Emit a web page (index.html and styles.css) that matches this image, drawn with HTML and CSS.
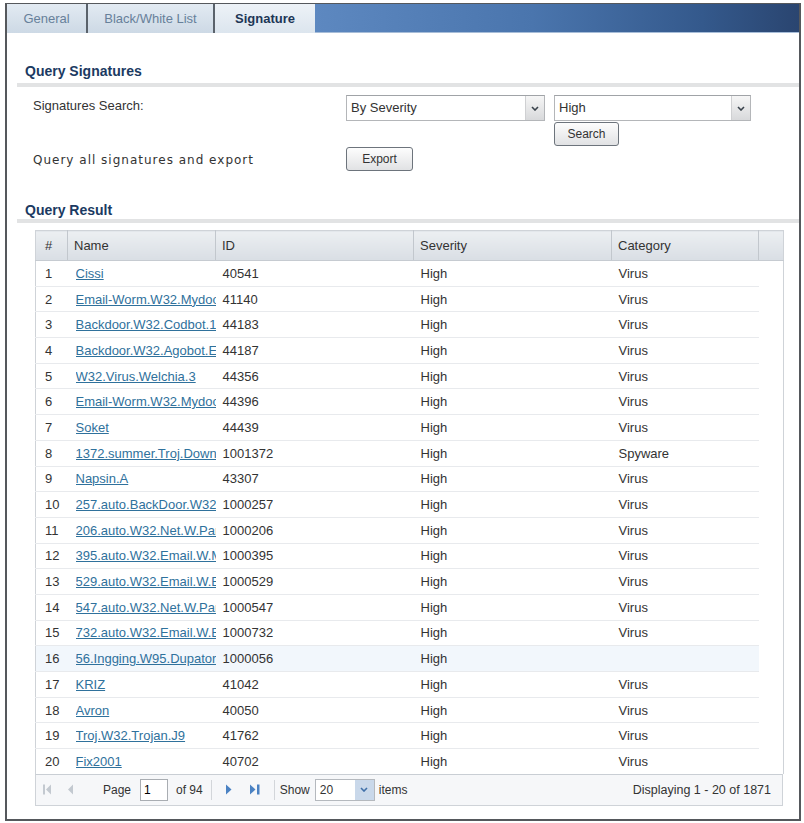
FILE: index.html
```html
<!DOCTYPE html>
<html lang="en">
<head>
  <meta charset="UTF-8" />
  <meta name="viewport" content="width=device-width, initial-scale=1.0"/>
  <title>IDP - Signature</title>
  <link rel="stylesheet" href="styles.css">
</head>
<body>
  <div class="panel">
    <div class="tabs">
      <div class="tab tab-general">General</div>
      <div class="tab tab-list">Black/White List</div>
      <div class="tab tab-active">Signature</div>
      <div class="tab-fill"></div>
    </div>

    <h3 class="section-title">Query Signatures</h3>
    <div class="query-form">
      <div class="form-label">Signatures Search:</div>
      <div class="search-controls">
        <div class="select select-type">
          <span class="select-text">By Severity</span>
          <span class="select-btn"><svg width="8" height="5" viewBox="0 0 8 5"><path d="M1 1 L4 4 L7 1" fill="none" stroke="#3a434c" stroke-width="1.6"/></svg></span>
        </div>
        <div class="search-col">
          <div class="select select-value">
            <span class="select-text">High</span>
            <span class="select-btn"><svg width="8" height="5" viewBox="0 0 8 5"><path d="M1 1 L4 4 L7 1" fill="none" stroke="#3a434c" stroke-width="1.6"/></svg></span>
          </div>
          <button class="btn btn-search">Search</button>
        </div>
      </div>
      <div class="form-label export-label">Query all signatures and export</div>
      <div><button class="btn btn-export">Export</button></div>
    </div>

    <h3 class="section-title result-title">Query Result</h3>
    <div class="grid-wrap">
      <table class="grid">
        <colgroup>
          <col style="width:32px"><col style="width:148px"><col style="width:198px">
          <col style="width:198px"><col style="width:147px"><col style="width:25px">
        </colgroup>
        <thead>
          <tr>
            <th class="c-num">#</th>
            <th>Name</th>
            <th>ID</th>
            <th>Severity</th>
            <th>Category</th>
            <th class="c-gutter"></th>
          </tr>
        </thead>
        <tbody id="rows"></tbody>
      </table>

      <div class="pager">
        <svg class="pg-first" width="8" height="11" viewBox="0 0 8 11"><rect x="0" y="0.5" width="2" height="10" fill="#c3c9d0"/><path d="M8 0.5 L3 5.5 L8 10.5 Z" fill="#c3c9d0"/></svg>
        <svg class="pg-prev" width="6" height="11" viewBox="0 0 6 11"><path d="M6 0.5 L1 5.5 L6 10.5 Z" fill="#c3c9d0"/></svg>
        <span class="pg-page">Page</span>
        <input class="pg-input" type="text" value="1">
        <span class="pg-of">of 94</span>
        <span class="pg-sep"></span>
        <svg class="pg-next" width="6" height="11" viewBox="0 0 6 11"><path d="M0 0.5 L5.5 5.5 L0 10.5 Z" fill="#4b82c3"/></svg>
        <svg class="pg-last" width="10" height="11" viewBox="0 0 10 11"><path d="M0 0.5 L5.5 5.5 L0 10.5 Z" fill="#4b82c3"/><rect x="7" y="0.5" width="2.5" height="10" fill="#4b82c3"/></svg>
        <span class="pg-sep pg-sep2"></span>
        <span class="pg-show">Show</span>
        <div class="pg-select">
          <span class="select-text">20</span>
          <span class="pg-select-btn"><svg width="8" height="5" viewBox="0 0 8 5"><path d="M1 1 L4 4 L7 1" fill="none" stroke="#3f6fa8" stroke-width="1.6"/></svg></span>
        </div>
        <span class="pg-items">items</span>
        <span class="pg-info">Displaying 1 - 20 of 1871</span>
      </div>
    </div>
  </div>

  <script>
    const signatures = [
      ['Cissi', '40541', 'Virus'],
      ['Email-Worm.W32.Mydoom.a', '41140', 'Virus'],
      ['Backdoor.W32.Codbot.1', '44183', 'Virus'],
      ['Backdoor.W32.Agobot.E', '44187', 'Virus'],
      ['W32.Virus.Welchia.3', '44356', 'Virus'],
      ['Email-Worm.W32.Mydoom.b', '44396', 'Virus'],
      ['Soket', '44439', 'Virus'],
      ['1372.summer.Troj.Downloader', '1001372', 'Spyware'],
      ['Napsin.A', '43307', 'Virus'],
      ['257.auto.BackDoor.W32.Agobot', '1000257', 'Virus'],
      ['206.auto.W32.Net.W.Parite', '1000206', 'Virus'],
      ['395.auto.W32.Email.W.Mydoom', '1000395', 'Virus'],
      ['529.auto.W32.Email.W.Bagle', '1000529', 'Virus'],
      ['547.auto.W32.Net.W.Parite', '1000547', 'Virus'],
      ['732.auto.W32.Email.W.Bagle', '1000732', 'Virus'],
      ['56.Ingging.W95.Dupator', '1000056', ''],
      ['KRIZ', '41042', 'Virus'],
      ['Avron', '40050', 'Virus'],
      ['Troj.W32.Trojan.J9', '41762', 'Virus'],
      ['Fix2001', '40702', 'Virus']
    ];

    const tbody = document.getElementById('rows');
    signatures.forEach((sig, i) => {
      const tr = document.createElement('tr');
      if (i === 15) tr.className = 'row-over';
      tr.innerHTML =
        '<td class="c-num">' + (i + 1) + '</td>' +
        '<td class="c-name"><div class="clip"><a href="#">' + sig[0] + '</a></div></td>' +
        '<td>' + sig[1] + '</td>' +
        '<td>High</td>' +
        '<td>' + sig[2] + '</td>' +
        '<td class="c-gutter"></td>';
      tbody.appendChild(tr);
    });
  </script>
</body>
</html>
```

FILE: styles.css
```css
body {
  margin: 0;
  font-family: "Liberation Sans", Arial, sans-serif;
  font-size: 13px;
  color: #333;
  background: #fff;
}
.panel {
  margin: 3px 3px 0 5px;
  height: 818px;
  box-sizing: border-box;
  border: 2px solid #55585c;
  border-top-width: 1px;
}

/* tabs */
.tabs {
  display: flex;
  height: 29px;
}
.tab {
  line-height: 29px;
  text-align: center;
  color: #67809a;
  background: linear-gradient(#e2eaf2, #cdd9e5);
  border-right: 2px solid #5a626b;
}
.tab-general {
  width: 79px;
}
.tab-list {
  width: 125px;
}
.tab-active {
  width: 100px;
  border-right: none;
  font-weight: bold;
  color: #1d3656;
  background: linear-gradient(#edf2f7, #dce5ee);
}
.tab-fill {
  flex: 1;
  background: linear-gradient(to right, #5d88c0, #4a75ad 45%, #34598c 80%, #2a4570);
  border-bottom: 1px solid #a7bdd8;
  box-sizing: border-box;
}

/* section titles */
.section-title {
  margin: 30px 0 0 10px;
  padding: 0 0 4px 8px;
  font-size: 14px;
  line-height: 16px;
  color: #1b3a62;
  border-bottom: 4px solid #e2e3e4;
}
.result-title {
  margin-top: 31px;
  padding-bottom: 1px;
}

/* query form */
.query-form {
  display: grid;
  grid-template-columns: 313px auto;
  margin-top: 8px;
  padding-left: 26px;
}
.form-label {
  padding-top: 3px;
  line-height: 16px;
  color: #333;
}
.export-label {
  padding-top: 6px;
  font-family: "DejaVu Sans", Verdana, sans-serif;
  font-size: 12px;
  letter-spacing: 1px;
}
.search-controls {
  display: flex;
  gap: 9px;
}
.search-col {
  display: flex;
  flex-direction: column;
  align-items: flex-start;
}
.select {
  display: flex;
  height: 26px;
  box-sizing: border-box;
  border: 1px solid #b4b6b9;
  border-top-color: #a0a3a7;
  background: #fff;
}
.select-type {
  width: 199px;
}
.select-value {
  width: 197px;
}
.select-text {
  flex: 1;
  padding-left: 4px;
  line-height: 24px;
}
.select-btn {
  width: 18px;
  display: flex;
  align-items: center;
  justify-content: center;
  background: linear-gradient(#f6f6f6, #d8d9db);
  border-left: 1px solid #cfd0d2;
}
.btn {
  height: 24px;
  padding: 0;
  font-family: "Liberation Sans", Arial, sans-serif;
  font-size: 12px;
  color: #333;
  background: linear-gradient(#fdfdfd, #e1e2e4);
  border: 1px solid #6d747c;
  border-radius: 3px;
}
.btn-search {
  width: 65px;
  margin-top: 1px;
}
.btn-export {
  width: 67px;
  margin-top: 1px;
}

/* result grid */
.grid-wrap {
  margin: 7px 0 0 28px;
  width: 748px;
}
.grid {
  width: 748px;
  table-layout: fixed;
  border-collapse: collapse;
  border: 1px solid #cfd3d8;
  border-bottom: none;
}
.grid th {
  height: 29px;
  padding: 0 0 0 6px;
  text-align: left;
  font-weight: normal;
  color: #333;
  background: linear-gradient(#eceff2, #d9dee4);
  border-right: 1px solid #c2c7cd;
  border-bottom: 1px solid #c6cbd1;
}
.grid th.c-num {
  padding-left: 9px;
}
.grid th.c-gutter {
  border-right: none;
}
.grid td {
  height: 24.7px;
  padding: 0 0 0 7px;
  white-space: nowrap;
  overflow: hidden;
  border-bottom: 1px solid #e8eaed;
}
.grid td.c-num {
  padding-left: 9px;
}
.grid td.c-name {
  padding-left: 8px;
}
.clip {
  overflow: hidden;
  white-space: nowrap;
}
.grid td.c-gutter {
  border-bottom: none;
}
.grid tr:last-child td {
  border-bottom: none;
}
.grid a {
  color: #2f719c;
}
.row-over td {
  background: #f2f7fc;
}
.row-over td.c-gutter {
  background: #fff;
}

/* pager */
.pager {
  display: flex;
  align-items: center;
  height: 32px;
  box-sizing: border-box;
  font-size: 12px;
  color: #333;
  background: #f6f7f9;
  border: 1px solid #cfd3d8;
  border-top-color: #c9ced4;
}
.pg-first {
  margin-left: 7px;
}
.pg-prev {
  margin-left: 16px;
}
.pg-page {
  margin-left: 30px;
}
.pg-input {
  margin-left: 9px;
  width: 28px;
  height: 22px;
  box-sizing: border-box;
  padding: 0 3px;
  font-family: "Liberation Sans", Arial, sans-serif;
  font-size: 12px;
  border: 1px solid #a9adb2;
  background: #fff;
}
.pg-of {
  margin-left: 8px;
}
.pg-sep {
  margin-left: 8px;
  width: 1px;
  height: 20px;
  background: #d3d6da;
}
.pg-next {
  margin-left: 14px;
}
.pg-last {
  margin-left: 18px;
}
.pg-sep2 {
  margin-left: 14px;
}
.pg-show {
  margin-left: 5px;
}
.pg-select {
  margin-left: 5px;
  display: flex;
  width: 60px;
  height: 22px;
  box-sizing: border-box;
  border: 1px solid #b5b9be;
  background: #fff;
}
.pg-select .select-text {
  line-height: 20px;
}
.pg-select-btn {
  width: 19px;
  display: flex;
  align-items: center;
  justify-content: center;
  background: #c9d8ea;
}
.pg-items {
  margin-left: 4px;
}
.pg-info {
  margin-left: auto;
  padding-right: 11px;
  font-size: 12.5px;
}
```
